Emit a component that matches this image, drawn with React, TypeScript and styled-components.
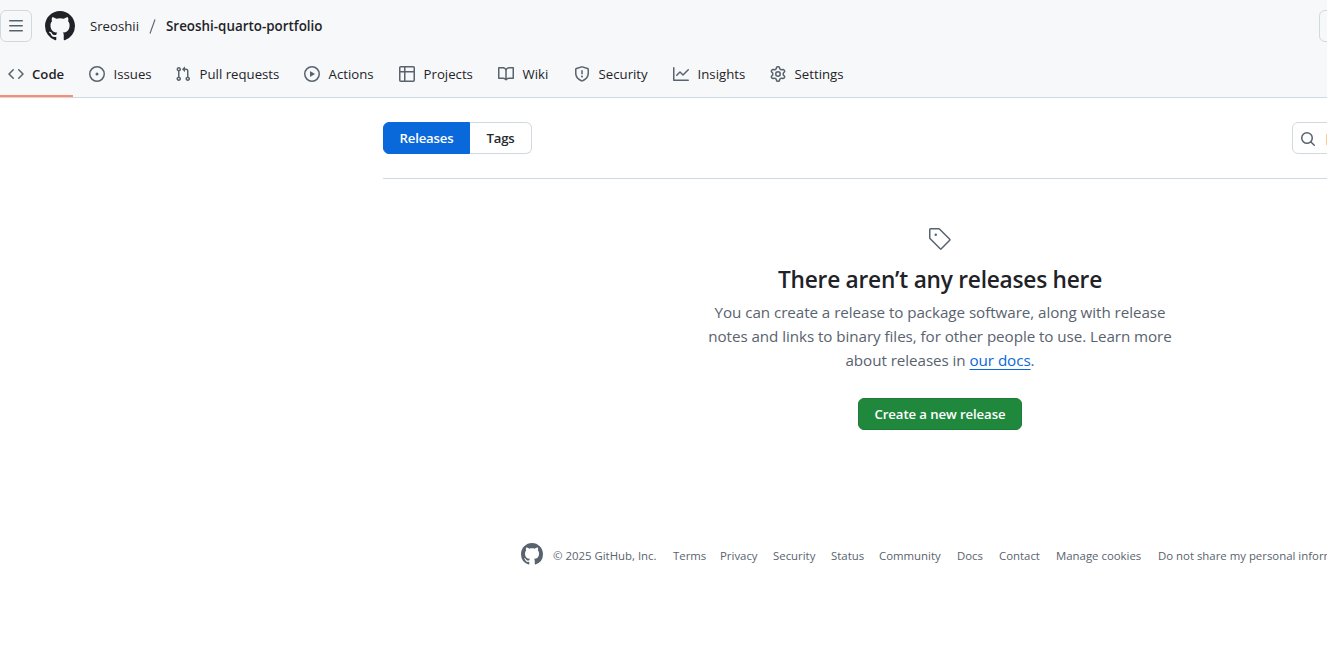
import React from 'react';
import styled, { createGlobalStyle, css } from 'styled-components';

const GlobalStyle = createGlobalStyle`
  *, *::before, *::after { box-sizing: border-box; }
  html, body { margin: 0; background: #ffffff; }
  body {
    overflow: hidden;
    font-family: "Open Sans", "Noto Sans", sans-serif;
    font-size: 13.2px;
    line-height: 20px;
    color: #1f2328;
  }
  a { color: inherit; text-decoration: none; }
`;

const paths = {
  bars: 'M1 2.75A.75.75 0 0 1 1.75 2h12.5a.75.75 0 0 1 0 1.5H1.75A.75.75 0 0 1 1 2.75Zm0 5A.75.75 0 0 1 1.75 7h12.5a.75.75 0 0 1 0 1.5H1.75A.75.75 0 0 1 1 7.75ZM1.75 12h12.5a.75.75 0 0 1 0 1.5H1.75a.75.75 0 0 1 0-1.5Z',
  github: 'M8 0c4.42 0 8 3.58 8 8a8.013 8.013 0 0 1-5.45 7.59c-.4.08-.55-.17-.55-.38 0-.27.01-1.13.01-2.2 0-.75-.25-1.23-.54-1.48 1.78-.2 3.65-.88 3.65-3.95 0-.88-.31-1.59-.82-2.15.08-.2.36-1.02-.08-2.12 0 0-.67-.22-2.2.82-.64-.18-1.32-.27-2-.27-.68 0-1.36.09-2 .27-1.53-1.03-2.2-.82-2.2-.82-.44 1.1-.16 1.92-.08 2.12-.51.56-.82 1.28-.82 2.15 0 3.06 1.86 3.75 3.64 3.95-.23.2-.44.55-.51 1.07-.46.21-1.61.55-2.33-.66-.15-.24-.6-.83-1.23-.82-.67.01-.27.38.01.53.34.19.73.9.82 1.13.16.45.68 1.31 2.69.94 0 .67.01 1.3.01 1.49 0 .21-.15.45-.55.38A7.995 7.995 0 0 1 0 8c0-4.42 3.58-8 8-8Z',
  code: 'm11.28 3.22 4.25 4.25a.75.75 0 0 1 0 1.06l-4.25 4.25a.749.749 0 0 1-1.275-.326.749.749 0 0 1 .215-.734L13.94 8l-3.72-3.72a.749.749 0 0 1 .326-1.275.749.749 0 0 1 .734.215Zm-6.56 0a.751.751 0 0 1 1.042.018.751.751 0 0 1 .018 1.042L2.06 8l3.72 3.72a.749.749 0 0 1-.326 1.275.749.749 0 0 1-.734-.215L.47 8.53a.75.75 0 0 1 0-1.06Z',
  issue: 'M8 9.5a1.5 1.5 0 1 0 0-3 1.5 1.5 0 0 0 0 3Z M8 0a8 8 0 1 1 0 16A8 8 0 0 1 8 0ZM1.5 8a6.5 6.5 0 1 0 13 0 6.5 6.5 0 0 0-13 0Z',
  pull: 'M1.5 3.25a2.25 2.25 0 1 1 3 2.122v5.256a2.251 2.251 0 1 1-1.5 0V5.372A2.25 2.25 0 0 1 1.5 3.25Zm5.677-.177L9.573.677A.25.25 0 0 1 10 .854V2.5h1A2.5 2.5 0 0 1 13.5 5v5.628a2.251 2.251 0 1 1-1.5 0V5a1 1 0 0 0-1-1h-1v1.646a.25.25 0 0 1-.427.177L7.177 3.427a.25.25 0 0 1 0-.354ZM3.75 2.5a.75.75 0 1 0 0 1.5.75.75 0 0 0 0-1.5Zm0 9.5a.75.75 0 1 0 0 1.5.75.75 0 0 0 0-1.5Zm8.25.75a.75.75 0 1 0 1.5 0 .75.75 0 0 0-1.5 0Z',
  play: 'M8 0a8 8 0 1 1 0 16A8 8 0 0 1 8 0ZM1.5 8a6.5 6.5 0 1 0 13 0 6.5 6.5 0 0 0-13 0Zm4.879-2.773 4.264 2.559a.25.25 0 0 1 0 .428l-4.264 2.559A.25.25 0 0 1 6 10.559V5.442a.25.25 0 0 1 .379-.215Z',
  table: 'M0 1.75C0 .784.784 0 1.75 0h12.5C15.216 0 16 .784 16 1.75v12.5A1.75 1.75 0 0 1 14.25 16H1.75A1.75 1.75 0 0 1 0 14.25ZM6.5 6.5v8h7.75a.25.25 0 0 0 .25-.25V6.5Zm8-1.5V1.75a.25.25 0 0 0-.25-.25H6.5V5Zm-13 1.5v7.75c0 .138.112.25.25.25H5v-8ZM5 5V1.5H1.75a.25.25 0 0 0-.25.25V5Z',
  book: 'M0 1.75A.75.75 0 0 1 .75 1h4.253c1.227 0 2.317.59 3 1.501A3.743 3.743 0 0 1 11.006 1h4.245a.75.75 0 0 1 .75.75v10.5a.75.75 0 0 1-.75.75h-4.507a2.25 2.25 0 0 0-1.591.659l-.622.621a.75.75 0 0 1-1.06 0l-.622-.621A2.25 2.25 0 0 0 5.258 13H.75a.75.75 0 0 1-.75-.75Zm7.251 10.324.004-5.073-.002-2.253A2.25 2.25 0 0 0 5.003 2.5H1.5v9h3.757a3.75 3.75 0 0 1 1.994.574ZM8.755 4.75l-.004 7.322a3.752 3.752 0 0 1 1.992-.572H14.5v-9h-3.495a2.25 2.25 0 0 0-2.25 2.25Z',
  shield: 'M7.467.133a1.748 1.748 0 0 1 1.066 0l5.25 1.68A1.75 1.75 0 0 1 15 3.48V7c0 1.566-.32 3.182-1.303 4.682-.983 1.498-2.585 2.813-5.032 3.855a1.697 1.697 0 0 1-1.33 0c-2.447-1.042-4.049-2.357-5.032-3.855C1.32 10.182 1 8.566 1 7V3.48a1.75 1.75 0 0 1 1.217-1.667Zm.61 1.429a.25.25 0 0 0-.153 0l-5.25 1.68a.25.25 0 0 0-.174.238V7c0 1.358.275 2.666 1.057 3.86.784 1.194 2.121 2.34 4.366 3.297a.196.196 0 0 0 .154 0c2.245-.956 3.582-2.104 4.366-3.298C13.225 9.666 13.5 8.36 13.5 7V3.48a.251.251 0 0 0-.174-.237l-5.25-1.68ZM8.75 4.75v3a.75.75 0 0 1-1.5 0v-3a.75.75 0 0 1 1.5 0ZM9 10.5a1 1 0 1 1-2 0 1 1 0 0 1 2 0Z',
  graph: 'M1.5 1.75V13.5h13.75a.75.75 0 0 1 0 1.5H.75a.75.75 0 0 1-.75-.75V1.75a.75.75 0 0 1 1.5 0Zm14.28 2.53-5.25 5.25a.75.75 0 0 1-1.06 0L7 7.06 4.28 9.78a.751.751 0 0 1-1.042-.018.751.751 0 0 1-.018-1.042l3.25-3.25a.75.75 0 0 1 1.06 0L10 7.94l4.72-4.72a.751.751 0 0 1 1.042.018.751.751 0 0 1 .018 1.042Z',
  gear: 'M8 0a8.2 8.2 0 0 1 .701.031C9.444.095 9.99.645 10.16 1.29l.288 1.107c.018.066.079.158.212.224.231.114.454.243.668.386.123.082.233.09.299.071l1.103-.303c.644-.176 1.392.021 1.82.63.27.385.506.792.704 1.218.315.675.111 1.422-.364 1.891l-.814.806c-.049.048-.098.147-.088.294.016.257.016.515 0 .772-.01.147.038.246.088.294l.814.806c.475.469.679 1.216.364 1.891a7.977 7.977 0 0 1-.704 1.217c-.428.61-1.176.807-1.82.63l-1.102-.302c-.067-.019-.177-.011-.3.071a5.909 5.909 0 0 1-.668.386c-.133.066-.194.158-.211.224l-.29 1.106c-.168.646-.715 1.196-1.458 1.26a8.006 8.006 0 0 1-1.402 0c-.743-.064-1.289-.614-1.458-1.26l-.289-1.106c-.018-.066-.079-.158-.212-.224a5.738 5.738 0 0 1-.668-.386c-.123-.082-.233-.09-.299-.071l-1.103.303c-.644.176-1.392-.021-1.82-.63a8.12 8.12 0 0 1-.704-1.218c-.315-.675-.111-1.422.363-1.891l.815-.806c.05-.048.098-.147.088-.294a6.214 6.214 0 0 1 0-.772c.01-.147-.038-.246-.088-.294l-.815-.806C.635 6.045.431 5.298.746 4.623a7.92 7.92 0 0 1 .704-1.217c.428-.61 1.176-.807 1.82-.63l1.102.302c.067.019.177.011.3-.071.214-.143.437-.272.668-.386.133-.066.194-.158.211-.224l.29-1.106C6.009.645 6.556.095 7.299.03 7.53.01 7.764 0 8 0Zm-.571 1.525c-.036.003-.108.036-.137.146l-.289 1.105c-.147.561-.549.967-.998 1.189-.173.086-.34.183-.5.29-.417.278-.97.423-1.529.27l-1.103-.303c-.109-.03-.175.016-.195.045-.22.312-.412.644-.573.99-.014.031-.021.11.059.19l.815.806c.411.406.562.957.53 1.456a4.709 4.709 0 0 0 0 .582c.032.499-.119 1.05-.53 1.456l-.815.806c-.081.08-.073.159-.059.19.162.346.353.677.573.989.02.03.085.076.195.046l1.102-.303c.56-.153 1.113-.008 1.53.27.161.107.328.204.501.29.447.222.85.629.997 1.189l.289 1.105c.029.109.101.143.137.146a6.6 6.6 0 0 0 1.142 0c.036-.003.108-.036.137-.146l.289-1.105c.147-.561.549-.967.998-1.189.173-.086.34-.183.5-.29.417-.278.97-.423 1.529-.27l1.103.303c.109.029.175-.016.195-.045.22-.313.411-.644.573-.99.014-.031.021-.11-.059-.19l-.815-.806c-.411-.406-.562-.957-.53-1.456a4.709 4.709 0 0 0 0-.582c-.032-.499.119-1.05.53-1.456l.815-.806c.081-.08.073-.159.059-.19a6.464 6.464 0 0 0-.573-.989c-.02-.03-.085-.076-.195-.046l-1.102.303c-.56.153-1.113.008-1.53-.27a4.44 4.44 0 0 0-.501-.29c-.447-.222-.85-.629-.997-1.189l-.289-1.105c-.029-.11-.101-.143-.137-.146a6.6 6.6 0 0 0-1.142 0ZM11 8a3 3 0 1 1-6 0 3 3 0 0 1 6 0ZM9.5 8a1.5 1.5 0 1 0-3.001.001A1.5 1.5 0 0 0 9.5 8Z',
  search: 'M10.68 11.74a6 6 0 0 1-7.922-8.982 6 6 0 0 1 8.982 7.922l3.04 3.04a.749.749 0 0 1-.326 1.275.749.749 0 0 1-.734-.215ZM11.5 7a4.499 4.499 0 1 0-8.997 0A4.499 4.499 0 0 0 11.5 7Z',
  tag: 'M7.75 6.5a1.25 1.25 0 1 1 0 2.5 1.25 1.25 0 0 1 0-2.5Z M2.5 1h8.44a1.5 1.5 0 0 1 1.06.44l10.25 10.25a1.5 1.5 0 0 1 0 2.12l-8.44 8.44a1.5 1.5 0 0 1-2.12 0L1.44 12A1.497 1.497 0 0 1 1 10.94V2.5A1.5 1.5 0 0 1 2.5 1Zm0 1.5v8.44l10.25 10.25 8.44-8.44L10.94 2.5Z',
};

type IconName = keyof typeof paths;

const Svg = styled.svg<{ $color: string }>`
  display: block;
  flex: none;
  fill: ${(p) => p.$color};
`;

function Icon({ name, size = 16, box = 16, color = '#59636e' }: { name: IconName; size?: number; box?: number; color?: string }) {
  return (
    <Svg width={size} height={size} viewBox={`0 0 ${box} ${box}`} $color={color} aria-hidden="true">
      <path d={paths[name]} />
    </Svg>
  );
}

const Page = styled.div`
  width: 1327px;
  height: 660px;
  overflow: hidden;
`;

const Header = styled.header`
  height: 98px;
  background: #f6f8fa;
  border-bottom: 1px solid #d1d9e0;
`;

const TopBar = styled.div`
  display: flex;
  align-items: center;
  height: 50px;
  padding-top: 2px;
`;

const SquareButton = styled.button`
  display: flex;
  flex: none;
  align-items: center;
  justify-content: center;
  width: 32px;
  height: 32px;
  padding: 0;
  background: transparent;
  border: 1px solid #d1d9e0;
  border-radius: 6px;
`;

const EdgeButton = styled(SquareButton)`
  margin-left: auto;
  margin-right: -24px;
`;

const HomeLink = styled.a`
  margin: 0 15px 0 13px;
`;

const Crumbs = styled.nav`
  display: flex;
  white-space: nowrap;
`;

const Owner = styled.a`
  width: 49px;
`;

const Slash = styled.svg`
  margin: 3px 10px 0 10px;
  width: 7px;
  height: 15px;
  stroke: #59636e;
  stroke-width: 1.1;
`;

const Repo = styled.a`
  font-size: 13.4px;
  font-weight: 600;
`;

const TabBar = styled.nav`
  display: flex;
  gap: 8px;
  height: 47px;
`;

const Tab = styled.a<{ $width: number; $active?: boolean }>`
  display: flex;
  align-items: center;
  gap: ${(p) => (p.$active ? 8 : 8.6)}px;
  width: ${(p) => p.$width}px;
  padding: 3px 0 0 8px;
  white-space: nowrap;
  border-bottom: 2px solid transparent;
  ${(p) => p.$active && css`
    font-weight: 600;
    border-bottom-color: #fd8c73;
  `}
`;

const Main = styled.main`
  width: 1114px;
  margin-left: 383px;
`;

const SubNav = styled.div`
  display: flex;
  justify-content: space-between;
  height: 81px;
  padding-top: 24px;
  border-bottom: 1px solid #d1d9e0;
`;

const Segments = styled.div`
  display: flex;
`;

const Segment = styled.a<{ $selected?: boolean }>`
  width: ${(p) => (p.$selected ? 87 : 62)}px;
  height: 32px;
  line-height: 30px;
  text-align: center;
  font-weight: 600;
  letter-spacing: -0.15px;
  color: ${(p) => (p.$selected ? '#ffffff' : '#25292e')};
  background: ${(p) => (p.$selected ? '#0969da' : '#ffffff')};
  border: 1px solid ${(p) => (p.$selected ? '#0969da' : '#d1d9e0')};
  border-left-width: ${(p) => (p.$selected ? 1 : 0)}px;
  border-radius: ${(p) => (p.$selected ? '6px 0 0 6px' : '0 6px 6px 0')};
`;

const SearchBox = styled.div`
  display: flex;
  align-items: center;
  width: 205px;
  height: 32px;
  padding: 2px 0 0 7px;
  gap: 10px;
  border: 1px solid #d1d9e0;
  border-radius: 6px;
`;

const Marker = styled.span`
  width: 90px;
  height: 11px;
  background: #ffcb94;
`;

const Blank = styled.section`
  display: flex;
  flex-direction: column;
  align-items: center;
  padding-top: 48px;
  text-align: center;
`;

const Title = styled.h2`
  margin: 11px 0 0;
  font-size: 22.7px;
  line-height: 36px;
  font-weight: 600;
  letter-spacing: -0.24px;
  white-space: nowrap;
`;

const Copy = styled.p`
  margin: 2px 0 0;
  font-size: 15.2px;
  line-height: 24px;
  letter-spacing: -0.06px;
  color: #59636e;
  white-space: nowrap;
`;

const DocsLink = styled.a`
  color: #0969da;
  text-decoration: underline;
  text-underline-offset: 3px;
  text-decoration-thickness: 1px;
`;

const CreateButton = styled.button`
  width: 164px;
  height: 32px;
  margin-top: 26px;
  padding: 0;
  font: inherit;
  font-weight: 600;
  letter-spacing: -0.1px;
  color: #ffffff;
  background: #1f883d;
  border: 1px solid #1c7d38;
  border-radius: 6px;
  white-space: nowrap;
`;

const Footer = styled.footer`
  display: flex;
  align-items: center;
  height: 24px;
  margin: 112px 0 0 521px;
  font-size: 11.4px;
  color: #59636e;
  white-space: nowrap;
`;

const FooterItem = styled.span<{ $width: number }>`
  flex: none;
  width: ${(p) => p.$width}px;
  padding-top: 3px;
`;

const FooterMark = styled.a`
  flex: none;
  width: 32px;
`;

const tabs: { icon: IconName; label: string; width: number }[] = [
  { icon: 'code', label: 'Code', width: 73 },
  { icon: 'issue', label: 'Issues', width: 78 },
  { icon: 'pull', label: 'Pull requests', width: 121 },
  { icon: 'play', label: 'Actions', width: 87 },
  { icon: 'table', label: 'Projects', width: 91 },
  { icon: 'book', label: 'Wiki', width: 68 },
  { icon: 'shield', label: 'Security', width: 91 },
  { icon: 'graph', label: 'Insights', width: 89 },
  { icon: 'gear', label: 'Settings', width: 91 },
];

const footerItems: [string, number][] = [
  ['© 2025 GitHub, Inc.', 120],
  ['Terms', 47],
  ['Privacy', 53],
  ['Security', 58],
  ['Status', 48],
  ['Community', 78],
  ['Docs', 42],
  ['Contact', 57],
  ['Manage cookies', 102],
  ['Do not share my personal information', 220],
];

export default function App() {
  return (
    <Page>
      <GlobalStyle />
      <Header>
        <TopBar>
          <SquareButton aria-label="Open menu"><Icon name="bars" /></SquareButton>
          <HomeLink><Icon name="github" size={30} color="#1f2328" /></HomeLink>
          <Crumbs>
            <Owner>Sreoshii</Owner>
            <Slash viewBox="0 0 7 15"><path d="M6 0.5 1 14.5" /></Slash>
            <Repo>Sreoshi-quarto-portfolio</Repo>
          </Crumbs>
          <EdgeButton aria-label="Search" />
        </TopBar>
        <TabBar>
          {tabs.map((t, i) => (
            <Tab key={t.label} $width={t.width} $active={i === 0}>
              <Icon name={t.icon} />
              {t.label}
            </Tab>
          ))}
        </TabBar>
      </Header>
      <Main>
        <SubNav>
          <Segments>
            <Segment $selected>Releases</Segment>
            <Segment>Tags</Segment>
          </Segments>
          <SearchBox><Icon name="search" /><Marker /></SearchBox>
        </SubNav>
        <Blank>
          <Icon name="tag" size={24} box={24} />
          <Title>There aren’t any releases here</Title>
          <Copy>
            You can create a release to package software, along with release<br />
            notes and links to binary files, for other people to use. Learn more<br />
            about releases in <DocsLink>our docs</DocsLink>.
          </Copy>
          <CreateButton>Create a new release</CreateButton>
        </Blank>
      </Main>
      <Footer>
        <FooterMark><Icon name="github" size={22} /></FooterMark>
        {footerItems.map(([label, width]) => (
          <FooterItem key={label} $width={width}>{label}</FooterItem>
        ))}
      </Footer>
    </Page>
  );
}
